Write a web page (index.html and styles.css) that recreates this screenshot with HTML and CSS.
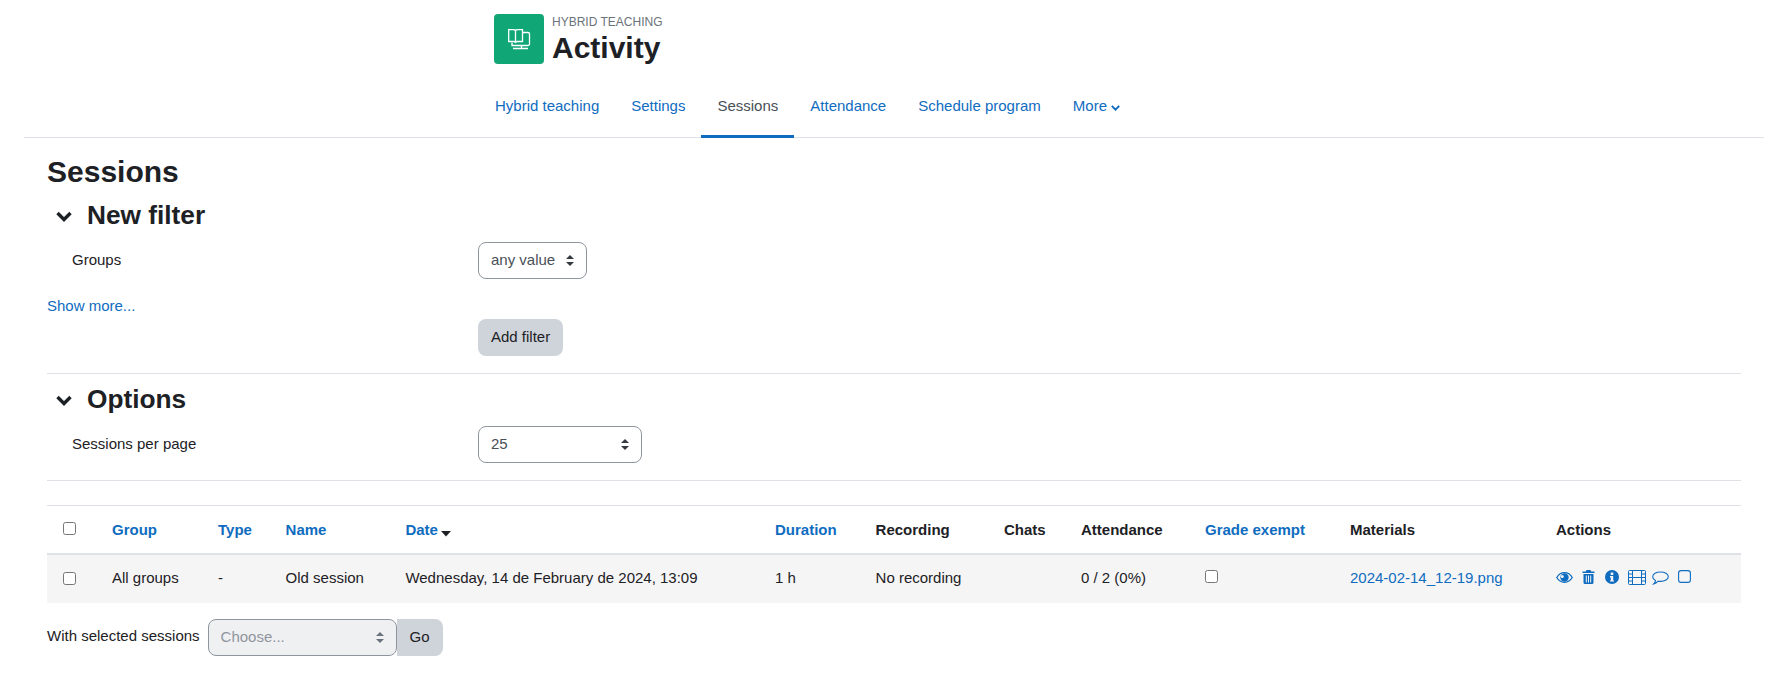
FILE: index.html
```html
<!DOCTYPE html>
<html lang="en">
<head>
<meta charset="utf-8">
<title>Sessions</title>
<link rel="stylesheet" href="styles.css">
</head>
<body>
<header class="head">
  <div class="title-row">
    <div class="modicon">
      <svg width="24" height="24" viewBox="0 0 24 24" fill="none" stroke="#fff" stroke-width="1.300">
        <path d="M1.700 2.700H6.500c1 0 1.700.4 2 1 .3-.6 1-1 2-1h5v11.800h-5c-.8 0-1.500.3-2 .8-.5-.5-1.200-.8-2-.8H1.700z"/>
        <path d="M8.500 3.700v11.600"/>
        <path d="M15.500 5.500h5.500a1.500 1.500 0 0 1 1.500 1.500v10a1.500 1.500 0 0 1-1.500 1.500H5v-3"/>
        <path d="M14.500 18.500v3M6 21.500h15"/>
      </svg>
    </div>
    <div class="title-text">
      <div class="kicker">HYBRID TEACHING</div>
      <h1 class="activity">Activity</h1>
    </div>
  </div>
  <nav class="tabs">
    <a class="tab" href="#">Hybrid teaching</a>
    <a class="tab" href="#">Settings</a>
    <a class="tab active" href="#">Sessions</a>
    <a class="tab" href="#">Attendance</a>
    <a class="tab" href="#">Schedule program</a>
    <a class="tab" href="#">More <svg class="more-caret" width="9" height="6" viewBox="0 0 9 6" fill="none" stroke="#0f6cbf" stroke-width="2"><path d="M.8.900l3.700 3.700L8.200.900"/></svg></a>
  </nav>
</header>
<main class="content">
  <h2 class="page-title">Sessions</h2>
  <section class="fieldset">
    <h3 class="legend"><svg class="chev" width="16" height="11" viewBox="0 0 16 11" fill="none" stroke="#1d2125" stroke-width="3.400"><path d="M1.500 2l6.500 6.500L14.500 2"/></svg>New filter</h3>
    <div class="field"><label class="field-label">Groups</label><div class="select sel-any">any value<svg class="updown" width="8" height="11" viewBox="0 0 8 11" fill="#343a40"><path d="M4 0l4 4H0zM4 11L0 7h8z"/></svg></div></div>
    <a class="show-more" href="#">Show more...</a>
    <div class="btn-row"><button class="btn">Add filter</button></div>
  </section>
  <section class="fieldset options">
    <h3 class="legend"><svg class="chev" width="16" height="11" viewBox="0 0 16 11" fill="none" stroke="#1d2125" stroke-width="3.400"><path d="M1.500 2l6.500 6.500L14.500 2"/></svg>Options</h3>
    <div class="field"><label class="field-label">Sessions per page</label><div class="select sel-25">25<svg class="updown" width="8" height="11" viewBox="0 0 8 11" fill="#343a40"><path d="M4 0l4 4H0zM4 11L0 7h8z"/></svg></div></div>
  </section>
  <table class="sessions">
    <thead>
      <tr>
        <th class="c-check"><span class="check head-check"></span></th>
        <th class="c-group"><a href="#">Group</a></th>
        <th class="c-type"><a href="#">Type</a></th>
        <th class="c-name"><a href="#">Name</a></th>
        <th class="c-date"><a href="#">Date</a> <svg class="sort" width="10" height="6" viewBox="0 0 10 6" fill="#1d2125"><path d="M0 0h10L5 5.500z"/></svg></th>
        <th class="c-dur"><a href="#">Duration</a></th>
        <th class="c-rec">Recording</th>
        <th class="c-chat">Chats</th>
        <th class="c-att">Attendance</th>
        <th class="c-grade"><a href="#">Grade exempt</a></th>
        <th class="c-mat">Materials</th>
        <th class="c-act">Actions</th>
      </tr>
    </thead>
    <tbody>
      <tr>
        <td><span class="check"></span></td>
        <td>All groups</td>
        <td>-</td>
        <td>Old session</td>
        <td>Wednesday, 14 de February de 2024, 13:09</td>
        <td>1 h</td>
        <td>No recording</td>
        <td></td>
        <td>0 / 2 (0%)</td>
        <td><span class="check grade-check"></span></td>
        <td><a href="#">2024-02-14_12-19.png</a></td>
        <td>
          <div class="actions">
            <svg class="i-eye" width="17" height="11" viewBox="0 0 17 11"><path fill="none" stroke="#0f6cbf" stroke-width="1.300" d="M.8 5.500C2.500 2.500 5.300.7 8.500.7s6 1.800 7.700 4.800c-1.700 3-4.500 4.800-7.700 4.800S2.500 8.500.8 5.500z"/><path fill="#0f6cbf" fill-rule="evenodd" d="M8.500 1.300a4.200 4.200 0 1 1 0 8.400 4.200 4.200 0 0 1 0-8.400zM6.300 3a1.500 1.500 0 1 0 0 3 1.500 1.500 0 0 0 0-3z"/></svg>
            <svg class="i-trash" width="13" height="14" viewBox="0 0 13 14"><path fill="#0f6cbf" fill-rule="evenodd" d="M4.500 0h4l.7 1.500h3.300V3H.5V1.500h3.300zM1.500 4h10v8.500A1.500 1.500 0 0 1 10 14H3a1.500 1.500 0 0 1-1.500-1.500zM3.800 5.500v7h1v-7zM6 5.500v7h1v-7zM8.200 5.500v7h1v-7z"/></svg>
            <svg class="i-info" width="14" height="14" viewBox="0 0 14 14"><path fill="#0f6cbf" fill-rule="evenodd" d="M7 0a7 7 0 1 1 0 14A7 7 0 0 1 7 0zM5.700 2.600v2.300h2.600V2.600zM5 6v1.400h.8v3H5v1.200h4v-1.200h-.8V6z"/></svg>
            <svg class="i-film" width="18" height="15" viewBox="0 0 18 15" fill="none" stroke="#0f6cbf"><rect x=".5" y=".5" width="17" height="14" rx="1"/><path d="M4.500 .5v14M13.500 .5v14M4.500 7.500h9M.5 4H4.500M.5 7.500H4.500M.5 11H4.500M13.500 4h4M13.500 7.500h4M13.500 11h4"/></svg>
            <svg class="i-chat" width="17" height="14" viewBox="0 0 17 14" fill="none" stroke="#0f6cbf" stroke-width="1.100"><path d="M8.500 1c4.200 0 7.800 1.900 7.800 4.700s-3.600 4.700-7.800 4.700c-.8 0-1.600-.1-2.300-.2-1 1-2.500 2.300-4.500 2.800.7-.7 1.700-2 1.800-3.500C1.800 8.600.7 7.300.7 5.700.7 2.900 4.300 1 8.500 1z"/></svg>
            <svg class="i-sq" width="13" height="13" viewBox="0 0 13 13" fill="none" stroke="#0f6cbf" stroke-width="1.100"><rect x=".6" y=".6" width="11.800" height="11.800" rx="2.500"/></svg>
          </div>
        </td>
      </tr>
    </tbody>
  </table>
  <div class="bulk">
    <span class="bulk-label">With selected sessions</span>
    <div class="select sel-choose">Choose...<svg class="updown" width="8" height="11" viewBox="0 0 8 11" fill="#6a737b"><path d="M4 0l4 4H0zM4 11L0 7h8z"/></svg></div>
    <button class="btn btn-go">Go</button>
  </div>
</main>
</body>
</html>
```
FILE: styles.css
```css
* { box-sizing: border-box; }
html, body { margin: 0; padding: 0; }
body {
  font-family: "Liberation Sans", Arial, sans-serif;
  font-size: 15px;
  line-height: 22.5px;
  color: #1d2125;
  background: #fff;
  height: 685px;
  overflow: hidden;
}
a { color: #0f6cbf; text-decoration: none; }
.head { margin: 0 20px 0 24px; padding: 14px 0 0 470px; border-bottom: 1px solid #dee2e6; height: 138px; }
.title-row { display: flex; height: 50px; }
.modicon { width: 50px; height: 50px; background: #11a676; border-radius: 4px; display: flex; align-items: center; justify-content: center; }
.title-text { margin-left: 8px; }
.kicker { font-size: 12px; line-height: 14px; color: #6a737b; margin-top: 1px; }
.activity { margin: 1px 0 0; font-size: 30px; line-height: 36px; font-weight: 700; }
.tabs { display: flex; margin: 22px 0 0 -15px; height: 52px; }
.tab { height: 52px; padding: 9px 16px 0; line-height: 22.5px; border-bottom: 3px solid transparent; white-space: nowrap; }
.tab.active { color: #495057; border-bottom-color: #0f6cbf; }
.more-caret { margin-left: 0; }
.content { padding: 0 43px 0 47px; }
.page-title { margin: 16px 0 0; font-size: 30px; line-height: 36px; font-weight: 700; }
.legend { margin: 9px 0 0; font-size: 26.25px; line-height: 32px; font-weight: 700; display: flex; align-items: center; }
.chev { margin: 3px 15px 0 9px; }
.field { display: flex; align-items: center; height: 37px; margin-top: 11px; padding-left: 25px; }
.field-label { width: 406px; }
.select {
  height: 37px; border: 1px solid #8f959e; border-radius: 8px; padding: 0 12px;
  display: flex; align-items: center; justify-content: space-between; color: #495057;
}
.sel-any { width: 109px; }
.sel-25 { width: 164px; }
.show-more { display: block; margin-top: 16px; }
.btn-row { padding-left: 431px; margin-top: 1px; }
.btn { height: 37px; border: 0; border-radius: 8px; background: #ced4da; color: #1d2125; font: inherit; padding: 0 13px; }
.fieldset { border-bottom: 1px solid #dee2e6; padding-bottom: 17px; }
.options { padding-bottom: 17px; }
.options .legend { margin-top: 9px; }
.sessions { width: 1694px; table-layout: fixed; border-collapse: collapse; margin-top: 24px; }
.sessions th, .sessions td { padding: 0 12px; text-align: left; vertical-align: middle; white-space: nowrap; }
.sessions th { height: 49px; padding-top: 2px; font-weight: 700; border-top: 1px solid #dee2e6; border-bottom: 2px solid #dee2e6; }
.sessions td { height: 49px; padding-bottom: 1px; background: #f5f5f6; }
.sessions th:first-child, .sessions td:first-child { padding-left: 16px; padding-right: 0; }
.c-check { width: 53px; }
.c-group { width: 106px; }
.c-type { width: 67.6px; }
.c-name { width: 119.8px; }
.c-date { width: 369.6px; }
.c-dur { width: 100.6px; }
.c-rec { width: 128.4px; }
.c-chat { width: 77px; }
.c-att { width: 124px; }
.c-grade { width: 145px; }
.c-mat { width: 206px; }
.c-act { width: 197px; }
.check { display: block; width: 13px; height: 13px; border: 1px solid #767676; border-radius: 2.500px; background: #fff; }
.grade-check { margin-top: -4px; }
.head-check { margin-top: -4px; }
.sort { margin-left: -1px; margin-bottom: -2px; }
.actions { display: flex; align-items: flex-start; height: 15px; margin-top: -2px; }
.i-eye { margin-top: 2px; }
.i-trash { margin-left: 9px; }
.i-info { margin-left: 10px; }
.i-film { margin-left: 9px; }
.i-chat { margin: 1px 0 0 6px; }
.i-sq { margin-left: 9px; }
.bulk { display: flex; align-items: center; margin-top: 16px; height: 37px; }
.bulk-label { margin-right: 8px; margin-top: -2px; }
.sel-choose { width: 189px; background: #eff0f2; color: #8f959e; }
.btn-go { padding: 0 13px; border-radius: 0 8px 8px 0; }
```
